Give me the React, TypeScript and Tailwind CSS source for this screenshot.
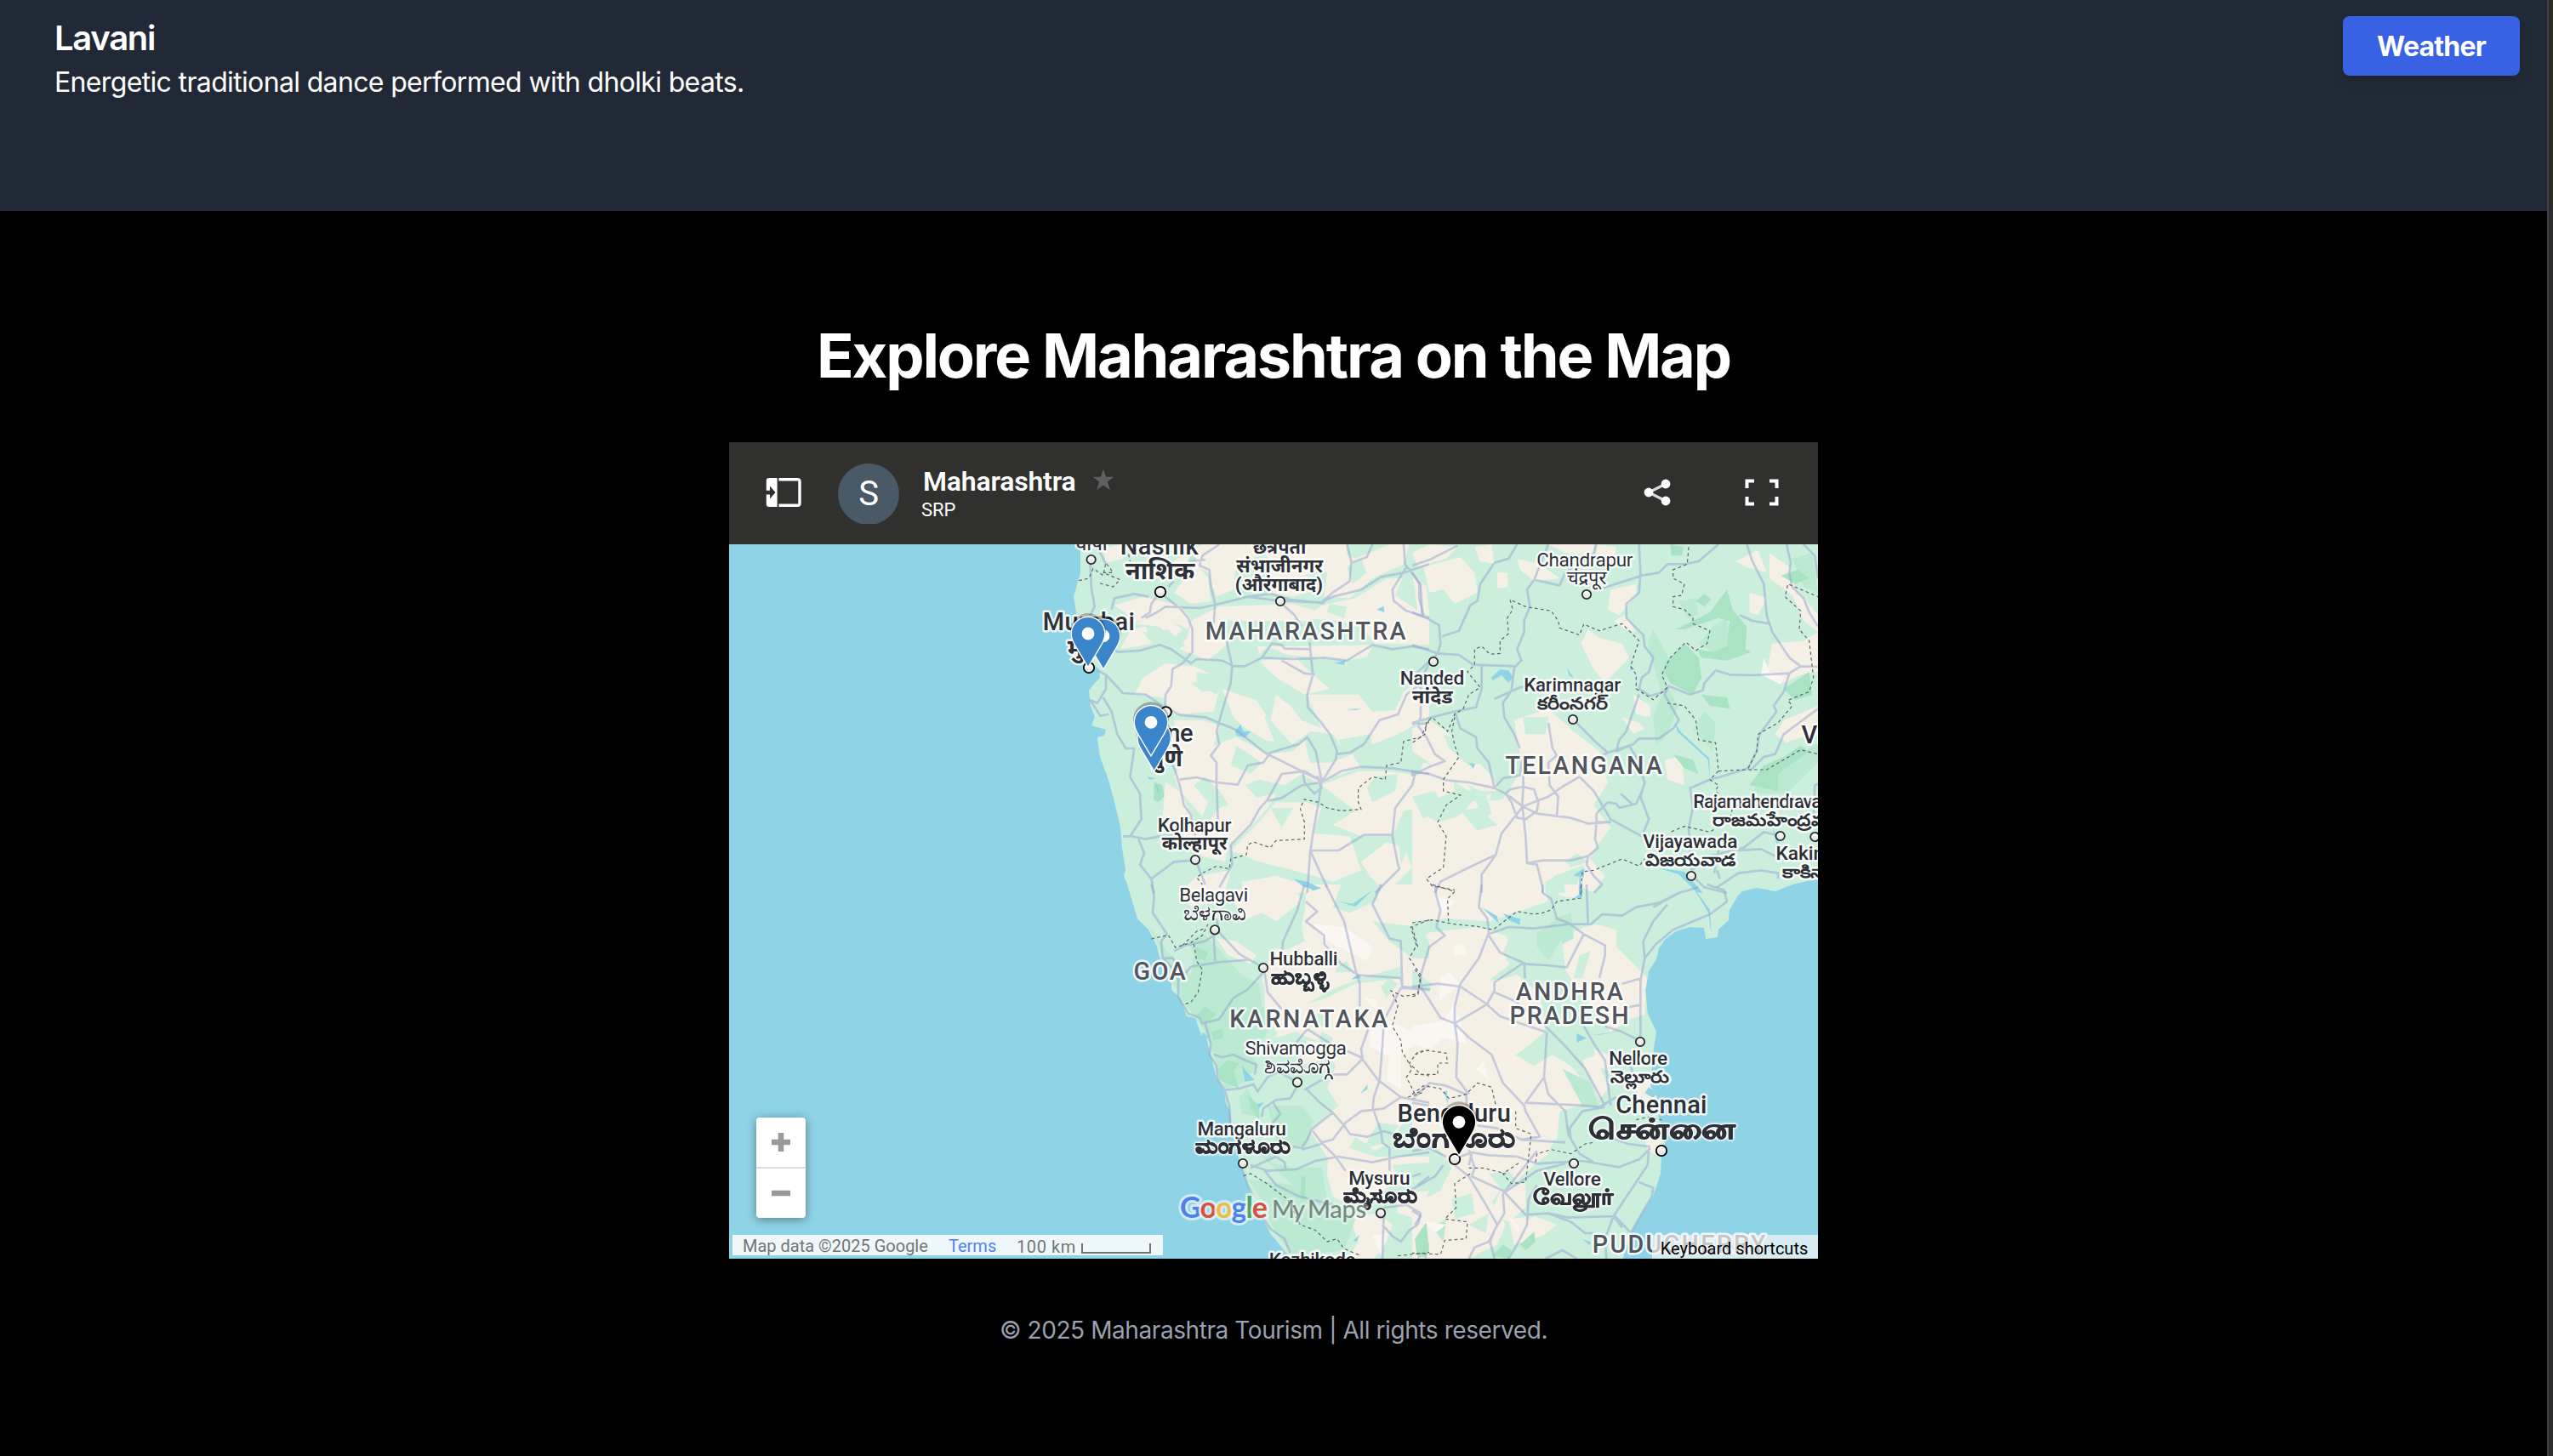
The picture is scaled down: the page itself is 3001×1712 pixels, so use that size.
import React from "react";

type Tile = "nw" | "ne" | "sw" | "se";
const ORIGIN: Record<Tile, [number, number]> = {
  nw: [1200, 630],
  ne: [1660, 630],
  sw: [1200, 1040],
  se: [1660, 1040],
};
const TILES: Tile[] = ["nw", "ne", "sw", "se"];
const place = (t: Tile) => `translate(${ORIGIN[t][0]} ${ORIGIN[t][1]}) scale(0.33333)`;

const LAND =
  "M1270,630 L1270,673 1262,702 1267,730 1268,763 1280,777 1292,787 1293,797 1287,803 1280,812 1282,830 1287,843 1283,853 1300,858 1298,865 1290,867 1293,890 1303,917 1310,943 1317,973 1319,997 1323,1023 1321,1030 1325,1040 1337,1080 1350,1093 1360,1113 1363,1125 1377,1157 1377,1164 1387,1173 1395,1195 1405,1197 1412,1217 1417,1215 1422,1237 1430,1267 1439,1283 1441,1297 1446,1307 1448,1327 1455,1357 1462,1380 1470,1403 1483,1430 1493,1450 1515,1477 1520,1490 L1905,1490 1908,1478 1917,1450 1930,1427 1943,1407 1952,1380 1953,1360 1958,1340 1955,1327 1950,1317 1948,1290 1940,1277 1943,1240 1947,1213 1937,1192 1934,1165 1938,1142 1947,1128 1950,1115 1957,1105 1970,1095 1987,1090 2003,1091 2005,1104 2019,1102 2020,1093 2032,1082 2033,1070 2043,1053 2048,1048 2065,1044 2087,1048 2107,1040 2140,1032 2140,630Z";

const SAND: Record<Tile, string> = {
  nw: "M290,45 350,30 360,80 300,95ZM410,45 470,30 460,80ZM500,110 590,60 640,30 840,30 850,70 760,90 750,190 690,215 660,130 600,95 560,150ZM620,95 660,150 670,230 600,240 540,200ZM850,50 940,30 1150,30 1150,90 1000,140 1070,180 960,215 880,200ZM1010,70 1090,40 1180,80 1300,30 1370,30 1350,100 1240,150 1160,220 1070,215 1080,130ZM1060,245 1180,220 1290,150 1345,150 1320,210 1440,290 1440,385 1250,380 1200,320 1120,300 1000,290ZM330,245 430,215 560,245 600,290 590,330 500,285 420,300 350,310 380,280ZM400,310 500,275 570,330 530,370 490,320ZM390,330 440,320 470,380 350,400ZM600,300 700,250 960,240 1060,270 1010,300 870,300 700,300 730,380 660,440 560,400 590,350ZM750,390 870,390 830,430 760,450ZM840,440 970,430 1020,480 1090,540 1000,560 900,500ZM870,390 1240,385 1220,430 1130,470 1040,430 940,420ZM430,500 510,450 610,460 700,500 600,520 640,550 700,545 680,620 540,630 500,570 400,560ZM710,540 830,580 870,640 900,560 950,600 990,650 1060,680 1010,560 1080,560 1190,560 1240,620 1320,615 1350,550 1390,520 1440,590 1440,640 1330,700 1230,740 1140,760 1100,700 1020,690 950,740 860,720 780,670 750,640ZM540,650 640,650 700,670 680,740 760,710 870,770 960,760 1000,720 1020,800 1090,800 1170,770 1200,820 1100,850 1060,880 990,840 930,880 840,860 790,880 830,920 740,960 700,900 650,850 610,880 660,940 640,990 560,900 540,850 580,770 550,730ZM510,870 560,900 610,1000 550,1030 500,990ZM560,1040 660,1010 700,960 790,930 900,910 870,960 810,1030 730,1100 720,1150 640,1130ZM740,1110 830,1020 900,940 1010,940 1060,960 1030,1050 1160,1060 1200,1180 1100,1220 1000,1190 840,1150ZM1060,880 1190,830 1290,830 1440,850 1440,950 1350,970 1310,1060 1200,1060 1100,1020 1180,970ZM1290,1080 1350,1100 1380,1170 1290,1260 1230,1200 1200,1150ZM620,1200 740,1180 720,1260 560,1260ZM780,1220 900,1200 1000,1230 1080,1260 780,1260ZM1380,900 1440,880 1440,1020 1390,1000Z",
  ne: "M0,60 60,30 160,40 120,80 20,110ZM40,110 170,75 220,130 230,200 150,240 110,190 60,200ZM220,40 280,30 290,100 240,90ZM370,80 450,100 520,150 430,160 380,120ZM300,130 335,130 340,180 300,185ZM480,30 640,30 640,70 540,60ZM650,30 720,40 710,100 650,80ZM700,190 790,170 790,210 730,280 690,260ZM710,300 750,280 790,340 750,330ZM595,380 620,330 660,360 740,380 765,430 680,520 640,470ZM1140,90 1220,50 1250,130 1180,110ZM1190,200 1250,220 1220,280 1190,270ZM1260,60 1330,110 1350,180 1431,280 1431,340 1380,300 1340,210 1260,150ZM1270,380 1380,370 1431,340 1431,480 1370,490 1310,520 1250,480ZM0,130 50,180 60,280 20,270ZM360,650 480,610 580,700 660,760 690,870 640,950 700,1030 640,1110 610,1160 500,1200 480,1260 0,1260 0,960 90,1010 160,990 230,940 320,930 390,820 370,720ZM740,640 800,660 820,680 780,700ZM890,790 950,780 960,880 900,860ZM0,680 60,650 120,690 200,760 280,850 310,900 200,900 120,850 60,800 0,760ZM40,800 140,830 150,900 60,940 0,900ZM1310,650 1431,600 1431,690 1320,730 1280,700ZM170,990 210,940 280,910 250,1000ZM780,560 840,600 840,640 790,630ZM620,1130 680,1200 640,1260 580,1230Z",
  sw: "M560,30 640,0 720,0 700,60 600,80ZM740,30 820,0 960,0 990,60 900,130 850,100 780,130ZM1010,0 1440,0 1440,560 1400,760 1310,900 1250,940 1180,890 1120,1000 1080,960 1020,870 1120,780 1080,720 1110,640 1060,560 970,520 900,540 920,450 870,400 850,340 870,280 900,210 980,190 1000,100ZM690,190 760,200 830,250 810,280 730,250ZM860,350 960,330 1040,370 1080,420 960,440 900,520 860,440ZM1090,870 1160,930 1250,960 1440,960 1440,1040 1300,1060 1260,1110 1160,1130 1100,1100 1080,1020ZM1160,1170 1260,1160 1310,1200 1290,1260 1240,1330 1150,1320 1190,1260ZM1320,1090 1440,1080 1400,1180 1330,1160ZM1010,550 1080,560 1060,620 980,640Z",
  se: "M0,0 460,0 480,60 400,90 440,140 350,170 320,240 360,310 430,370 460,430 470,520 370,600 460,580 560,640 640,740 590,780 520,800 510,900 420,940 330,1050 280,1120 330,1200 300,1270 200,1320 0,1320 0,1130 100,1080 140,1000 90,930 0,900ZM500,0 600,0 600,50 520,40ZM560,160 650,140 720,160 720,220 790,290 830,330 820,460 780,470 700,520 660,460 590,380 540,300 530,210ZM600,620 650,600 690,720 660,760ZM640,580 690,600 700,660 650,640ZM790,660 850,700 870,800 800,780ZM370,940 440,920 500,900 480,950 420,1000 350,1060ZM340,1180 430,1170 510,1200 460,1240 360,1270ZM310,1080 400,1050 400,1140 340,1190 280,1160ZM820,900 880,900 880,960 830,940Z",
};

const MINT: Record<Tile, string> = {
  nw: "M730,340 830,380 850,440 740,500 720,440ZM620,480 740,500 690,560 620,520ZM860,640 900,570 880,650 960,740 900,740ZM1150,110 1200,80 1220,130 1170,170ZM1090,240 1150,250 1140,290 1080,270ZM950,540 1030,610 1000,620ZM1120,720 1230,700 1240,740 1140,770ZM760,740 850,800 810,840 740,810ZM1250,850 1330,840 1320,900 1240,940 1220,890ZM880,960 960,960 920,1030ZM1330,1060 1370,1090 1340,1160ZM430,340 520,330 580,390 480,400ZM850,60 900,100 870,130ZM1060,430 1140,440 1210,430 1300,400 1440,400 1380,470 1290,540 1190,540 1100,530 1040,480Z",
  ne: "M0,920 80,900 110,960 40,1000ZM200,880 260,910 280,980 250,1000ZM50,980 140,940 170,960 100,1010ZM170,970 230,960 300,1020 230,1040ZM470,1220 530,1190 540,1260 470,1260ZM390,640 480,640 470,700 400,700ZM540,1150 580,1120 620,1150 560,1170ZM110,700 190,730 250,800 200,810 130,750Z",
  sw: "M1130,0 1280,0 1250,60 1160,100 1100,80ZM780,150 990,140 1000,200 940,230 870,220 820,190ZM1240,130 1400,150 1440,200 1440,260 1380,260 1300,200ZM1010,420 1100,370 1200,330 1340,290 1340,330 1180,350 1080,400ZM1110,290 1150,270 1170,310 1110,310ZM1260,840 1330,850 1300,910 1210,930 1230,890ZM1020,460 1090,450 1080,500 1020,500ZM1060,520 1100,540 1090,580 1050,560ZM1270,360 1300,330 1330,350 1290,400ZM1310,990 1440,980 1440,1040 1340,1050Z",
  se: "M0,130 120,120 270,130 330,110 480,60 500,120 560,140 700,20 690,120 560,170 500,220 540,300 430,300 330,330 270,340 370,260 330,180 230,150 60,170 0,230ZM0,300 70,350 60,380 0,370ZM360,600 470,570 510,590 430,640ZM430,300 500,300 530,400 450,380ZM590,250 630,235 600,330 570,330ZM270,1020 340,1010 370,1050 320,1080ZM140,1110 210,1090 220,1160 150,1180ZM200,1200 270,1160 260,1230ZM380,1160 430,1110 470,1160 410,1180Z",
};

const FOREST: Record<Tile, string> = {
  nw: "M470,870 500,880 505,920 485,940 468,930Z",
  ne: "M910,30 960,40 950,70 915,70ZM1000,230 1030,205 1055,225 1030,250ZM930,330 1050,270 1110,190 1130,260 1180,320 1175,400 1195,410 1110,440 1020,430 1005,400 1060,410 1110,390 1120,300 1080,290 960,330ZM900,440 960,380 1010,430 1020,500 990,560 910,520 885,470ZM1020,560 1110,570 1120,610 1050,600ZM1300,140 1360,120 1400,150 1350,170ZM1310,540 1400,480 1410,560 1350,580ZM1190,880 1240,810 1310,780 1370,740 1400,760 1290,840 1290,900ZM920,770 990,790 1010,840 960,820Z",
  sw: "M615,220 660,240 650,270 620,260ZM620,460 650,430 690,460 650,490ZM670,520 710,510 715,540 680,550ZM695,650 730,620 770,630 750,660 770,720 700,690ZM800,740 840,780 840,830 810,790ZM990,1030 1005,1030 1000,1110 985,1100ZM1390,1250 1430,1190 1440,1300 1400,1320Z",
  se: "M10,1250 40,1220 60,1270 50,1320 15,1300ZM380,1270 430,1225 435,1260 400,1290ZM280,1310 320,1270 350,1290 340,1320Z",
};

const HILLS: Record<Tile, string> = {
  nw: "M590,60 620,80 600,110Z",
  ne: "M830,380 850,330 910,440 890,520 940,600 900,700 860,740 850,640 880,560ZM1030,620 1070,660 1060,760 990,680ZM940,230 1000,220 1010,280 970,290ZM1010,380 1060,320 1110,290 1120,390 1060,410ZM1250,850 1431,730 1431,800 1320,910 1190,910ZM1340,80 1410,60 1431,200 1380,180Z",
  sw: "M445,140 480,200 500,260 530,340 600,450 650,520 680,600 720,720 780,700 840,640 780,560 860,540 890,470 850,430 840,350 780,320 700,230 640,170 590,200 610,250 600,320 520,240ZM770,750 800,720 850,820 780,810ZM870,780 990,780 1030,830 1010,920 920,930 880,980 960,1000 1060,1000 1080,1110 1180,1180 1140,1290 960,1310 900,1230 840,1100 800,1040 960,1060 840,950 900,900Z",
  se: "M440,170 500,130 540,170 480,270 440,220ZM500,120 560,100 570,190 530,210ZM530,650 630,700 660,790 600,780ZM70,1210 120,1180 110,1260Z",
};

const PALE: Record<Tile, string> = {
  nw: "",
  ne: "M1240,430 1260,480 1310,500 1300,525 1230,490Z",
  sw: "M1030,140 1140,150 1240,220 1220,270 1160,240 1080,200ZM1210,400 1260,410 1250,440ZM1230,520 1300,480 1420,540 1340,600 1340,720 1290,690 1300,610 1230,570ZM1240,1240 1290,1230 1270,1310Z",
  se: "M80,40 150,60 110,110ZM145,220 180,210 195,250 150,250ZM100,330 130,310 170,350 95,410ZM0,500 110,480 150,420 190,560 110,540 60,580 0,560ZM225,650 250,625 270,690ZM45,1190 120,1200 80,1230ZM340,1170 380,1210 375,1230Z",
};

const WATER: Record<Tile, string> = {
  nw: "M755,690 775,665 785,690 812,690 790,712 762,705ZM1255,260 1280,248 1282,270ZM1105,450 1145,438 1140,455ZM1145,612 1200,610 1180,615ZM475,865 490,910 480,900ZM960,1210 1010,1220 1060,1245 1000,1240ZM445,850 475,855 455,860Z",
  ne: "M278,500 310,472 340,475 355,500 340,518 315,492 285,510ZM545,468 570,500 555,495ZM768,455 785,470 770,475ZM200,800 222,805 215,822ZM928,660 945,690 1048,785 1050,860 1043,790 935,690ZM568,1198 608,1172 605,1205ZM870,1172 960,1185 1025,1260 1005,1258 940,1195ZM1270,1030 1295,1080 1285,1085ZM590,1190 603,1260 588,1260Z",
  sw: "M1000,0 1060,12 1030,22ZM1120,60 1170,68 1240,20 1180,78ZM780,640 800,665 825,690 790,695ZM832,775 858,768 840,790ZM1198,738 1222,705 1222,722ZM1165,335 1190,315 1200,330ZM1172,1258 1195,1235 1185,1258ZM636,520 660,535 655,560Z",
  se: "M985,0 1050,90 1055,180 1045,100ZM245,80 300,112 303,135ZM320,102 382,122 378,142 340,125ZM580,525 615,542 580,558ZM640,530 740,517 660,530ZM820,735 835,715 865,735 850,752ZM600,1250 632,1262 625,1272ZM587,0 598,0 600,45 568,50 588,35ZM112,730 122,728 127,780Z",
};

const ROADS: Record<Tile, string> = {
  nw: "M245,90 248,180 260,250 240,290M300,100 280,60 250,30M440,290 480,270 510,250 630,255 700,240 800,215 900,228 1060,235 1100,215 1200,190 1270,145 1350,130 1440,100M800,215 880,205 950,225 1070,238M700,30 640,70 630,105 665,120 670,180 685,240 680,310M490,200 460,240 455,270 425,290M490,200 560,255 590,290 605,330 605,410 570,450 535,470 530,530 510,560 508,620M320,260 330,220 400,205 450,215M290,310 300,370 340,410 420,405 490,385 530,400 600,450 620,435 710,440 750,460 790,460 850,430 960,435 1070,430 1150,440 1240,385 1310,400 1380,390 1440,400M850,430 885,380 920,385 930,398 1018,400M920,440 1000,485 1035,490M915,235 965,280 990,320M725,370 745,460 740,520 715,600 690,690 700,735 670,775 690,800 690,870 695,1000M1018,375 1030,490 1010,560 1012,605 1060,660 1090,700 1115,760 1110,790 1060,870 1050,940 1030,1050 1020,1120 1010,1260M270,475 300,490 360,555 440,560 500,600 560,632 650,640 760,685 860,765 930,800 1000,835 1060,865M300,490 300,540 270,590 245,580 280,635 310,630M290,570 320,620 340,700 370,750 400,750 385,850 420,910 425,1000 385,1060 360,1060M390,1060 440,1070 490,1060 550,1055M415,1070 435,1120 420,1160 460,1210 470,1260M460,1210 540,1150 610,1145M510,760 545,830 560,880 575,950 600,985 615,1060M560,860 620,852 690,870 765,878 800,810 855,800 880,765 980,735 1010,710 1040,760 1060,860M870,935 920,925 990,880 1060,870 1130,830 1200,815 1310,820 1440,840M1060,865 1000,830 920,840 870,930 840,965 810,1020 740,1090 745,1160 700,1240M1060,870 1045,850 1060,890 1035,910 1000,870 995,830M1390,840 1380,880 1320,960 1310,1060 1330,1160 1335,1175 1250,1260M1310,1055 1210,1055 1120,1110 1020,1110 1080,1240M1115,770 1160,765 1210,735 1265,650 1330,630 1360,560 1400,530 1440,450M1150,30 1165,90 1160,160 1100,200 1060,235M1350,30 1355,100 1410,170 1415,280M1240,30 1220,75 1165,95M1360,110 1310,190 1315,230 1360,265 1440,290M1440,660 1400,665M615,1140 650,1230M590,90 650,85M520,180 540,160",
  ne: "M0,105 60,85 160,35M370,30 340,80 290,95 240,170 230,230 205,245 165,335 105,355M0,270 50,290 95,315 100,380 90,415M0,385 90,415 165,420 215,455 360,460M0,130 25,170 25,220 40,280M480,30 430,155 405,190 415,250 395,300 395,340 370,400 385,440 360,465 350,545 320,590 325,640 360,700 380,750M430,155 520,175 540,130 640,60 650,30M800,30 805,130 800,200 755,240 755,290 815,350 820,390 850,430 835,480 810,500 800,540 840,565 890,550 905,530M640,195 810,140 870,130 900,100 960,100 1010,90 1080,30M380,535 290,575M380,535 450,520M90,415 10,490 30,530 30,640 20,660 0,665M0,660 70,640 150,620 225,605 245,540 245,460M150,620 170,680 225,710 230,750 270,800 290,890 330,910 390,955M20,670 50,710 80,770 115,795 60,815 0,845 0,830 60,840 120,862 200,870 290,890M290,890 320,855 380,845 390,780M390,780 392,880 388,950M330,910 345,895 390,885 430,895 445,940 440,970 400,1000 370,995 350,940 330,910M390,955 480,920 530,885 590,850M390,955 345,920M390,955 440,980 560,995 620,1015 700,1010M390,955 315,1050 295,1125 200,1170 100,1220 80,1260M295,1125 245,1195 245,1260M388,950 400,1060 405,1155 440,1160 460,1240 460,1260M405,1155 460,1145 560,1145 620,1130M480,660 495,750 510,775 480,800 485,880 515,920 510,990M570,650 650,730 690,765 780,735 720,760 730,720 755,690 800,560M690,765 660,780M780,735 800,715 870,715 920,680 940,650 890,560 905,530 980,560 1025,545 1030,520 1070,475 1120,490 1200,492 1330,485 1370,460 1430,462M765,740 790,780 820,870 805,920 835,1000 810,1060M590,850 640,900 700,1000 810,1060M700,1010 650,1010 650,980 690,940 720,945 730,960 790,945 810,900M735,910 780,950M650,1010 645,1070 655,1100 620,1130 615,1160M615,1160 640,1200 670,1230 640,1260M1180,30 1200,90 1240,170 1250,280 1270,340 1330,430 1370,460M1155,280 1200,300 1260,310M1320,30 1335,95 1330,130 1340,180 1380,220 1400,270 1431,320M1380,30 1420,70 1431,150M1330,485 1310,550 1275,600 1285,620 1225,700 1215,760 1185,820 1090,850 1050,860M1190,830 1240,780 1280,770 1310,700 1431,610M1050,860 980,890 990,960 975,1030 985,1180M985,1180 1050,1130 1170,1100 1240,1045 1300,1060M1065,1190 1080,1110M1075,1240 1150,1190 1230,1180 1290,1190 1290,1210M1085,1210 1075,1180M1150,1110 1230,1105 1280,1130M1415,1030 1420,880 1431,875M1000,1210 1030,1240 1110,1260",
  sw: "M460,0 470,40 465,100 515,175 495,200 500,260 540,300 555,340 555,395 590,455 630,470 640,490 700,475 750,400 800,370 855,310M555,340 600,290 690,275 750,270 810,265M540,235 580,215 650,200 680,180 685,270M500,260 535,260 560,290M690,120 700,170 770,245 850,290M860,310 870,380 920,440M1000,0 975,90 925,200 920,240M1005,60 1045,95 1005,130 1070,180 1070,210 1130,280 1190,320M1075,0 1140,130 1180,300 1195,350 1195,430M1270,0 1240,70 1300,190 1340,200 1345,360M1190,320 1340,330 1345,360 1440,370 1340,365 1280,480 1275,570 1265,690 1245,750 1240,800M1225,510 1200,580 1205,615 1150,670 1100,670M970,560 1010,510 1090,560 1200,610 1260,690 1340,750 1440,770M650,490 670,560 665,600 690,640 695,690 720,725 770,720 820,705 835,730 870,680 910,660 960,690M680,600 710,610 750,600 780,615 830,635 825,670M720,730 735,780 740,860 800,860M850,820 855,790 900,760 950,755 975,710M890,770 915,810 880,850M1010,725 1055,770 1100,805 1140,850 1160,880 1220,890 1280,870 1330,885M1100,805 1025,865 1010,900 990,930 960,925M1030,870 1060,910 1110,960 1145,1010M1060,910 1100,900 1145,840 1200,800 1280,790 1340,750M1245,800 1270,870 1275,910 1300,930 1300,1010M1060,915 990,935M810,1000 900,960 930,980 935,1010M810,990 870,1010 970,1005 1040,975 1120,960 1240,980 1330,960 1440,945M780,1000 800,1060 820,1100M860,1010 900,1060 980,1100 1100,1130M850,1170 880,1215 930,1250 950,1300M1280,1160 1275,1320M1275,1200 1310,1240 1340,1260 1370,1220 1400,1200M1280,1140 1360,1130 1410,1160 1400,1200M1440,1030 1400,1060M1000,725 1060,690",
  se: "M80,0 85,40 100,90 85,150 115,180 60,220 30,320 30,365M245,0 235,80 265,120 270,170 235,260 170,350 150,430 150,490 160,560 155,680 200,740M460,0 460,30 490,50 510,120 550,135 605,175 680,215 680,250 660,330M615,0 620,140M270,175 340,150 430,155 550,140 630,140 670,105 740,110 790,80 870,65 940,30 1010,10M270,180 310,240 400,280 470,285 545,292 605,175M395,275 290,345 290,375 265,420M395,275 398,330M290,380 360,410 450,480 540,570 610,650 680,780M0,360 90,350 170,360 260,420 310,465 470,520M150,490 260,425M30,360 100,470 150,490 200,540 280,600 320,700 395,780 400,800 450,890 380,900M475,520 470,600 465,680 400,770 580,778 660,785 720,750M465,680 480,740 540,800 550,880 590,950 640,980M680,785 600,800 555,860 560,900M600,490 640,560 680,620 690,700 700,780M820,260 860,210 920,160 1050,105 1110,60 1100,20 1040,0M900,70 850,130 815,200 820,260 805,340 805,540M940,30 850,80M740,350 810,330M680,500 740,520 800,550M770,640 780,670M750,435 805,425M0,760 60,700 120,710 190,740 195,800M170,960 210,945 270,955 370,960 440,985 600,975 730,997 800,970 840,930M380,900 460,905 540,910M640,885 720,900 760,915 840,925M0,940 60,930 120,960M0,770 60,780M200,935 220,1000 210,1030 320,1080 400,1165 480,1160 550,1175 715,1170 790,1250M150,990 200,1030 260,1130 300,1200 270,1260 220,1280 200,1320M110,990 80,1030 0,1075M210,950 200,990M320,1090 440,1010 540,985M320,1090 440,940M320,1090 325,1160 290,1220 275,1260M440,1060 410,1110 405,1200 370,1270 340,1320M480,1160 560,1190 610,1230 640,1230M710,1170 790,1050 830,990 835,930M800,1050 850,1070 845,1100 770,1230M710,1170 680,1250 685,1320M710,1170 740,1210M275,1260 290,1320M470,1320 530,1290 580,1320M0,1150 30,1170 10,1200M0,1030 30,1020M230,850 300,860 385,900",
};

const BORDERS: Record<Tile, string> = {
  nw: "M205,158 240,150 255,115 290,140 300,95 325,130 290,130 350,155 325,180 270,165M380,65 385,90M1440,650 1410,710 1350,725 1340,800 1290,810 1285,860 1240,850 1190,890 1190,940 1200,965 1130,970 1080,960 1050,940 1000,930 985,960 1000,1010 1000,1070 900,1075 880,1100 820,1080 800,1090 795,1125 740,1140 735,1175 690,1165 640,1190 620,1205 640,1230",
  ne: "M975,40 970,100 920,120 920,150 960,170 950,210 920,215 920,250 960,260 990,290 990,310 1050,335 1040,380 1000,405 965,375 910,430 880,490 900,535 850,578 790,540 790,490 770,460 800,370 740,310 660,335 605,312 590,350 520,325 515,300 490,265 400,250 345,225 355,260 335,290 340,345 310,370 310,415 275,418 245,390 220,400 220,455 195,480 240,535 200,560 180,610 150,630 125,690 70,640 50,660 45,700 0,730M150,640 140,690 150,740 165,780 130,830 110,860 110,900 170,915 120,950 90,1010 120,1060 110,1170 50,1210 70,1235 150,1250M900,590 960,600 1000,650 1010,720 1070,730 1080,830 1050,860 1080,880 1070,900 1090,920 1130,960 1120,1000 1050,1045 960,1025 910,1045M1080,830 1180,825 1250,825 1370,755 1431,770M1185,820 1215,760 1220,700 1290,660 1340,600 1325,580 1400,550 1415,500 1400,370 1365,330 1370,265 1315,215 1325,170 1431,215M595,1260 600,1185 640,1180 740,1140 800,1165 820,1140",
  sw: "M460,192 520,178 545,222 600,205 640,180 660,140M570,215 620,165 650,155M610,210 620,270 640,300 625,380 600,415 570,425M1440,125 1375,150 1395,215 1370,260 1410,320 1400,385 1350,395 1305,375 1330,425 1310,500 1340,550 1345,590 1380,650 1360,680 1390,740 1440,710M1440,585 1400,590 1370,630 1410,670 1440,675M1365,750 1415,735M785,1028 810,1020 860,1050 900,1080 940,1110 985,1200 1040,1220 1080,1260 1115,1250 1140,1285 1200,1310M1330,1310 1440,1298",
  se: "M0,135 70,125 150,140 230,148 285,160 370,95 430,105 460,100 490,90 510,60 595,48 595,0M70,0 150,25 125,50 128,130M0,150 20,220M10,300 30,330 20,390 0,395M10,600 50,585 120,595 125,630 90,630 90,670 0,670M0,740 40,710 100,720 130,755 190,740 230,700 280,715 295,780M365,800 365,860 420,880 400,1050 350,1055 320,1020 380,980M200,1000 250,1000 330,1020M435,980 440,950 490,935 560,950 610,915 640,910M790,830 830,820 880,830M205,1020 150,1055 155,1140 115,1180 195,1190 190,1250 115,1255 100,1305 0,1300",
};

type Label = [Tile, string, number, number, number | null, number, number, string?];
const INK = "#2d3036";
const STATE = "#51555d";
const LABELS: Label[] = [
  ["nw", "वापी", 195, 50, 110, 60, 500],
  ["nw", "Nashik", 355, 67, 275, 87, 500],
  ["nw", "नाशिक", 368, 152, 245, 84, 700],
  ["nw", "छत्रपती", 818, 62, 188, 64, 700],
  ["nw", "संभाजीनगर", 760, 128, 305, 66, 700],
  ["nw", "(औरंगाबाद)", 755, 196, 310, 66, 700],
  ["nw", "Mumbai", 82, 333, 324, 87, 500],
  ["nw", "मुंबई", 165, 425, 150, 84, 700],
  ["nw", "MAHARASHTRA", 655, 366, 707, 86, 500, STATE],
  ["nw", "Pune", 420, 726, 192, 87, 500],
  ["nw", "पुणे", 455, 812, 115, 84, 700],
  ["nw", "Kolhapur", 487, 1045, 260, 68, 500],
  ["nw", "कोल्हापूर", 497, 1108, 231, 66, 700],
  ["ne", "Chandrapur", 443, 107, 340, 68, 400],
  ["ne", "चंद्रपूर", 545, 172, 140, 66, 400],
  ["ne", "Nanded", -38, 525, 226, 68, 500],
  ["ne", "नांदेड", 0, 590, 143, 66, 700],
  ["ne", "Karimnagar", 398, 548, 342, 68, 500],
  ["ne", "కరీంనగర్", 442, 612, 248, 60, 700],
  ["ne", "TELANGANA", 333, 840, 553, 86, 500, STATE],
  ["ne", "Visakhapatnam", 1377, 732, null, 87, 500],
  ["ne", "Rajamahendravaram", 995, 960, 560, 68, 500],
  ["ne", "రాజమహేంద్రవరం", 1060, 1022, 470, 60, 700],
  ["ne", "Vijayawada", 818, 1100, 334, 68, 500],
  ["ne", "విజయవాడ", 823, 1165, 320, 60, 700],
  ["ne", "Kakinada", 1287, 1142, null, 68, 500],
  ["ne", "కాకినాడ", 1305, 1207, 230, 60, 700],
  ["sw", "Belagavi", 563, 60, 243, 68, 400],
  ["sw", "ಬೆಳಗಾವಿ", 572, 125, 222, 74, 400],
  ["sw", "Hubballi", 882, 286, 240, 68, 500],
  ["sw", "ಹುಬ್ಬಳ್ಳಿ", 882, 350, 205, 76, 700],
  ["sw", "GOA", 402, 335, 184, 86, 500, STATE],
  ["sw", "KARNATAKA", 740, 503, 558, 86, 500, STATE],
  ["sw", "Shivamogga", 795, 600, 358, 68, 400],
  ["sw", "ಶಿವಮೊಗ್ಗ", 857, 665, 240, 74, 400],
  ["sw", "Mangaluru", 627, 885, 313, 68, 500],
  ["sw", "ಮಂಗಳೂರು", 615, 948, 335, 76, 700],
  ["sw", "Mysuru", 1160, 1058, 217, 68, 500],
  ["sw", "ಮೈಸೂರು", 1137, 1122, 262, 76, 700],
  ["sw", "Kozhikode", 880, 1348, 305, 68, 500],
  ["se", "Bengaluru", -48, 838, 400, 87, 500],
  ["se", "ಬೆಂಗಳೂರು", -68, 928, 432, 98, 700],
  ["se", "ANDHRA", 370, 407, 378, 86, 500, STATE],
  ["se", "PRADESH", 348, 492, 420, 86, 500, STATE],
  ["se", "Nellore", 698, 635, 207, 68, 500],
  ["se", "నెల్లూరు", 698, 698, 207, 60, 700],
  ["se", "Chennai", 722, 808, 322, 87, 500],
  ["se", "சென்னை", 622, 898, 518, 98, 700],
  ["se", "Vellore", 467, 1063, 203, 68, 500],
  ["se", "வேலூர்", 427, 1128, 283, 74, 700],
  ["se", "PUDUCHERRY", 640, 1298, 610, 86, 500, STATE],
];

const TOWNS: [Tile, number, number, boolean][] = [
  ["nw", 248, 84, false], ["nw", 492, 198, true], ["nw", 915, 231, false],
  ["nw", 240, 465, true], ["nw", 512, 622, true], ["nw", 615, 1143, false],
  ["ne", 615, 207, false], ["ne", 75, 444, false], ["ne", 567, 648, false],
  ["ne", 1298, 1059, false], ["ne", 1420, 1062, false], ["ne", 984, 1200, false],
  ["sw", 684, 160, false], ["sw", 855, 294, false], ["sw", 975, 698, false],
  ["sw", 783, 984, false], ["sw", 1269, 1159, false],
  ["se", 804, 555, false], ["se", 879, 939, true], ["se", 570, 984, false],
  ["se", 150, 969, true],
];

const PINS: [Tile, number, number, string][] = [
  ["nw", 291, 353, "#3b86cb"],
  ["nw", 237, 345, "#3b86cb"],
  ["nw", 470, 712, "#3b86cb"],
  ["nw", 459, 658, "#3b86cb"],
  ["se", 165, 838, "#000000"],
];

function Layer({ data, fill }: { data: Record<Tile, string>; fill: string }) {
  return (
    <g fill={fill}>
      {TILES.map((t) => (
        <path key={t} d={data[t]} transform={place(t)} />
      ))}
    </g>
  );
}

const isSouthern = (text: string) => /[\u0B80-\u0BFF\u0C80-\u0CFF]/.test(text);
const isIndic = (text: string) => /[\u0900-\u0CFF]/.test(text);

function MapLabel({ label }: { label: Label }) {
  const [t, text, x, y, w, size, weight, color] = label;
  const ink = color ?? INK;
  const southern = isSouthern(text);
  return (
    <text
      x={ORIGIN[t][0] + x / 3 - (isIndic(text) ? 0 : 1.5)}
      y={ORIGIN[t][1] + y / 3}
      fontSize={size / 3}
      fontWeight={weight}
      fill={ink}
      stroke={southern ? ink : "#ffffff"}
      strokeOpacity={southern ? 1 : 0.85}
      strokeWidth={southern ? (weight > 500 ? 1.1 : 0.4) : 5}
      textLength={w ? w / 3 : undefined}
      lengthAdjust={isIndic(text) ? "spacingAndGlyphs" : "spacing"}
      className={
        southern
          ? "[filter:drop-shadow(0_0_1px_white)_drop-shadow(0_0_1px_white)_drop-shadow(0_0_1px_white)]"
          : undefined
      }
    >
      {text}
    </text>
  );
}

function MapCanvas() {
  return (
    <svg className="block h-[840px] w-[1280px]" viewBox="857 640 1280 840">
      <defs>
        <clipPath id="land">
          <path d={LAND} />
        </clipPath>
        <linearGradient id="dot" x1="0" y1="0" x2="0" y2="1">
          <stop offset="0" stopColor="#ffffff" />
          <stop offset="1" stopColor="#dcdcdc" />
        </linearGradient>
      </defs>
      <rect x="857" y="640" width="1280" height="840" fill="#8fd3e6" />
      <path d={LAND} fill="#cbeedd" />
      <g clipPath="url(#land)">
        <Layer data={SAND} fill="#f5f0e5" />
        <Layer data={MINT} fill="#cbeedd" />
        <Layer data={HILLS} fill="#bbe9d2" />
        <Layer data={FOREST} fill="#aae3c4" />
        <Layer data={PALE} fill="#faf7f3" />
        <Layer data={WATER} fill="#8fd3e6" />
      </g>
      <g fill="none" stroke="#95a4d1" strokeOpacity="0.5" strokeWidth="8" strokeLinejoin="round">
        {TILES.map((t) => (
          <path key={t} d={ROADS[t]} transform={place(t)} />
        ))}
      </g>
      <g fill="none" stroke="#5f646c" strokeWidth="3.6" strokeDasharray="11 10">
        {TILES.map((t) => (
          <path key={t} d={BORDERS[t]} transform={place(t)} />
        ))}
      </g>
      {TOWNS.map(([t, x, y, big]) => (
        <circle
          key={`${t}${x}`}
          cx={ORIGIN[t][0] + x / 3}
          cy={ORIGIN[t][1] + y / 3}
          r={big ? 6.2 : 5.2}
          fill="url(#dot)"
          stroke={big ? "#000" : "#2b2b2b"}
          strokeWidth={1.8}
        />
      ))}
      <g fontFamily='Roboto, "Noto Sans", sans-serif' strokeLinejoin="round" paintOrder="stroke">
        {LABELS.map((label) => (
          <MapLabel key={label[1]} label={label} />
        ))}
      </g>
      <g fontFamily="Lato, sans-serif" fontSize="34" paintOrder="stroke" strokeLinejoin="round" stroke="#ffffff" strokeOpacity="0.6" strokeWidth="6">
        <text x="1387" y="1432" fontWeight="700" textLength="103">
          <tspan fill="#4f80ee">G</tspan>
          <tspan fill="#d9503f">o</tspan>
          <tspan fill="#f0bd3f">o</tspan>
          <tspan fill="#4f80ee">g</tspan>
          <tspan fill="#4aa45c">l</tspan>
          <tspan fill="#d9503f">e</tspan>
        </text>
        <g fontSize="29" fontWeight="500" fill="#5f6b66" fillOpacity="0.8" strokeOpacity="0.35">
          <text x="1495" y="1432" textLength="39">My</text>
          <text x="1537" y="1432" textLength="69">Maps</text>
        </g>
      </g>
      {PINS.map(([t, x, y, color]) => (
        <g key={`${t}${x}`} transform={`translate(${ORIGIN[t][0] + x / 3} ${ORIGIN[t][1] + y / 3})`}>
          <circle cx="0" cy="-3" r="21" fill="#000" fillOpacity="0.28" />
          <path
            d="M0,39.5 L-15.500,13.500 C-18.500,8.500 -19.800,5 -19.8,0 A19.8,19.8 0 1 1 19.8,0 C19.8,5 18.500,8.500 15.500,13.500Z"
            fill={color}
            stroke="#fff"
            strokeWidth="1.4"
          />
          <circle r="7.4" fill="#fff" />
        </g>
      ))}
    </svg>
  );
}

function MapHeader() {
  return (
    <div className="flex h-[120px] items-start bg-[#30312e] text-white">
      <svg className="ml-[43px] mt-[42px] h-[34px] w-[42px] shrink-0" viewBox="0 0 42 34">
        <path d="M4 0H13.6V34H4Q.8 34 .8 30.800V19.400H5V24.500L11.500 17L5 9.500V14.700H.8V3.200Q.8 0 4 0Z" fill="#fff" />
        <path d="M15.500 1.700H37.500Q40 1.700 40 4V30Q40 32.300 37.500 32.300H15.500" fill="none" stroke="#fff" strokeWidth="3.400" />
      </svg>
      <div className="ml-[43px] mt-[25px] h-[71px] w-[72px] shrink-0 overflow-hidden">
        <div className="flex h-[72px] w-[72px] items-center justify-center rounded-full bg-[#495a66] font-[Roboto] text-[40px]">
          S
        </div>
      </div>
      <div className="ml-[26px] mt-[27px] w-[184px] font-[Roboto] leading-none">
        <div className="ml-[2px] flex h-[38px] items-center text-[32px] font-semibold tracking-[-0.2px]">Maharashtra</div>
        <div className="flex h-[30px] items-center text-[22px]">SRP</div>
      </div>
      <svg className="ml-[15px] mt-[29px] h-[30px] w-[30px]" viewBox="0 0 30 30">
        <path d="M15 1L18.500 11.200H29L20.500 17.600L23.800 28.500L15 22L6.200 28.500L9.500 17.600L1 11.200H11.500Z" fill="#606060" stroke="#242523" strokeWidth=".8" />
      </svg>
      <svg className="ml-[620px] mt-[43px] h-[32px] w-[32px]" viewBox="0 0 32 32">
        <path d="M26 6L6 16L26 26" fill="none" stroke="#dcdcdc" strokeWidth="3.200" />
        <circle cx="26" cy="6" r="5.400" fill="#fff" />
        <circle cx="6" cy="16" r="5.400" fill="#fff" />
        <circle cx="26" cy="26" r="5.400" fill="#fff" />
      </svg>
      <svg className="ml-[87px] mt-[43px] h-[32px] w-[40px]" viewBox="0 0 40 32">
        <path d="M2.500 11V2.500H11M29 2.500H37.500V11M37.500 21V29.500H29M11 29.500H2.500V21" fill="none" stroke="#fff" strokeWidth="4" />
      </svg>
    </div>
  );
}

export default function App() {
  return (
    <div className="flex h-[1712px] w-[3001px] overflow-hidden bg-black font-[Inter] text-white">
      <div className="w-[2994px] shrink-0">
        <section className="flex h-[248px] items-start justify-between bg-[#222936] pl-[64px] pr-[32px]">
          <div>
            <h3 className="mt-[17px] text-[40px] font-semibold leading-[56px] tracking-[-1.3px]">Lavani</h3>
            <p className="text-[32px] leading-[48px] tracking-[-0.65px]">
              Energetic traditional dance performed with dholki beats.
            </p>
          </div>
          <button className="mt-[19px] h-[70px] w-[208px] rounded-lg bg-[#3862e3] pt-[2px] text-[32px] font-bold tracking-[-0.8px] shadow-lg">
            Weather
          </button>
        </section>
        <main className="flex flex-col items-center">
          <h2 className="mt-[130px] text-[72px] font-bold leading-[80px] tracking-[-2.13px]">
            Explore Maharashtra on the Map
          </h2>
          <div className="relative mt-[62px] h-[960px] w-[1280px] overflow-hidden">
            <MapHeader />
            <MapCanvas />
            <div className="absolute left-[32px] top-[794px] flex h-[118px] w-[58px] flex-col rounded-[4px] bg-white shadow-[0_2px_12px_rgba(0,0,0,0.4)]">
              <div className="flex flex-1 items-center justify-center border-b-2 border-[#dcdcdc]">
                <svg className="h-[22px] w-[22px]" viewBox="0 0 22 22">
                  <path d="M0 11H22M11 0V22" stroke="#999" strokeWidth="6.500" />
                </svg>
              </div>
              <div className="flex flex-1 items-center justify-center">
                <svg className="h-[22px] w-[22px]" viewBox="0 0 22 22">
                  <path d="M0 11H22" stroke="#999" strokeWidth="6.500" />
                </svg>
              </div>
            </div>
            <div className="absolute bottom-[4px] left-[4px] flex h-[24px] w-[506px] items-center bg-white/85 pl-[12px] font-[Roboto] text-[20px] leading-none text-[#747474]">
              <span className="w-[242px] whitespace-nowrap pt-[2px]">Map data ©2025 Google</span>
              <span className="w-[80px] pt-[2px] text-[#5181f0]">Terms</span>
              <span className="w-[76px] whitespace-nowrap pt-[4px] tracking-[0.6px]">100 km</span>
              <span className="mt-[7px] h-[12px] w-[82px] border-2 border-t-0 border-[#747474]" />
            </div>
            <div className="absolute bottom-0 right-0 flex h-[28px] w-[195px] items-center justify-center whitespace-nowrap bg-[#f5f5f5]/70 pr-[2px] pt-[3px] font-[Roboto] text-[20px] leading-none text-black">
              Keyboard shortcuts
            </div>
          </div>
          <footer className="mt-[64px] text-[28px] leading-[40px] tracking-[-0.42px] text-[#9ba1b0]">
            © 2025 Maharashtra Tourism | All rights reserved.
          </footer>
        </main>
      </div>
      <div className="h-full w-[7px] border-l-2 border-[#414141] bg-[#2c2c2b]" />
    </div>
  );
}
